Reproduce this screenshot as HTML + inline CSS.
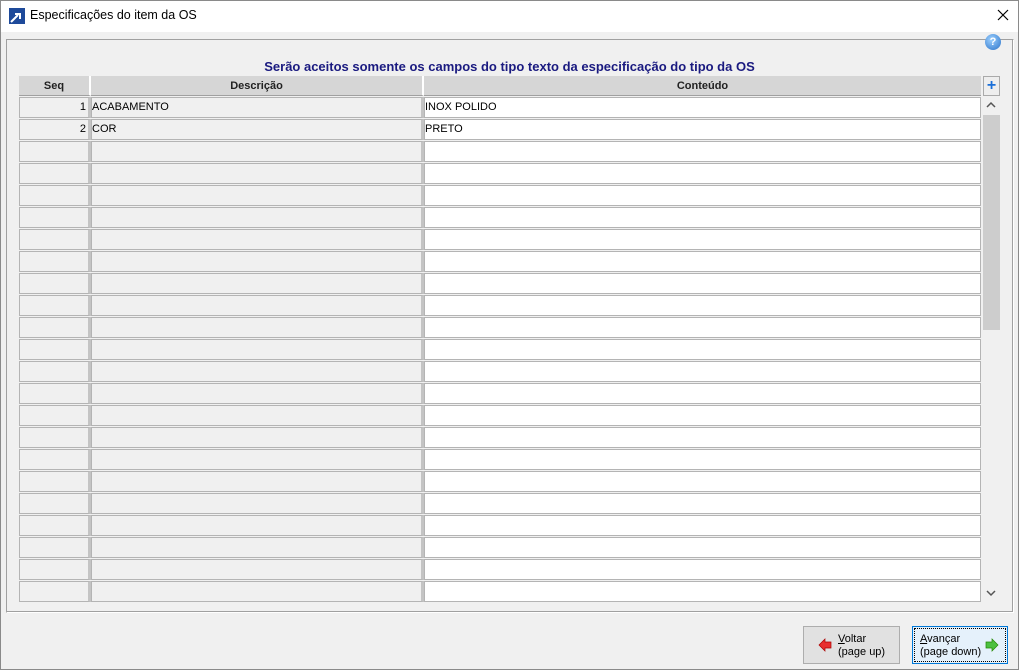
<!DOCTYPE html>
<html><head><meta charset="utf-8"><style>
*{box-sizing:border-box;margin:0;padding:0}
body{width:1019px;height:670px;background:#f0f0f0;font-family:"Liberation Sans",Tahoma,sans-serif;font-size:11px;position:relative;overflow:hidden}
.frame{position:absolute;left:0;top:0;width:1019px;height:670px;border:1px solid #8a8a8a;pointer-events:none}
.title{position:absolute;left:0;top:0;width:1019px;height:32px;background:#fff}
.title span{position:absolute;left:30px;top:8px;font-size:12.5px;color:#000}
.panel{position:absolute;left:6px;top:39px;width:1008px;height:574px;border:1px solid #a0a0a0;border-right-color:#fff;border-bottom-color:#fff;box-shadow:inset -1px -1px 0 #a0a0a0}
.hdr{position:absolute;top:76px;height:20px;background:#d6d6d6;border-bottom:1px solid #a0a0a0;font-weight:bold;text-align:center;line-height:20px;font-size:11px;color:#222}
.row{position:absolute;left:19px;height:21px;width:962px}
.c{position:absolute;top:0;height:21px;border:1px solid #b4b4b4;line-height:19px;white-space:nowrap;overflow:hidden}
.s{left:0;width:72px;background:#f0f0f0;text-align:right;padding-right:2px;border-right:3px solid #c4c4c4}
.d{left:72px;width:333px;background:#f0f0f0;border-right:3px solid #c4c4c4}
.t{left:405px;width:557px;background:#fff}
.btn{position:absolute;top:626px;height:38px;border:1px solid #adadad;background:#e1e1e1;font-size:11px;line-height:13px;color:#000}
</style></head><body>
<div class="title">
<svg style="position:absolute;left:9px;top:8px" width="16" height="16"><rect width="16" height="16" fill="#1e4a9a"/><path d="M2 14 L9 7 M6 6 H11 V11" stroke="#fff" stroke-width="2" fill="none"/></svg>
<span>Especificações do item da OS</span>
<svg style="position:absolute;left:997px;top:9px" width="12" height="12"><path d="M1 1L11 11M11 1L1 11" stroke="#000" stroke-width="1.2"/></svg>
</div>
<div class="panel"></div>
<div style="position:absolute;left:985px;top:34px;width:16px;height:16px;border-radius:50%;background:radial-gradient(circle at 40% 35%,#9cd0ff,#2a72c8);color:#fff;font-weight:bold;font-size:11px;text-align:center;line-height:16px">?</div>
<div style="position:absolute;left:0;width:1019px;top:59px;text-align:center;font-weight:bold;font-size:13px;color:#1a1a80">Serão aceitos somente os campos do tipo texto da especificação do tipo da OS</div>
<div class="hdr" style="left:19px;width:72px;border-right:2px solid #fff">Seq</div>
<div class="hdr" style="left:91px;width:333px;border-right:2px solid #fff">Descrição</div>
<div class="hdr" style="left:424px;width:557px">Conteúdo</div>
<div style="position:absolute;left:983px;top:76px;width:17px;height:20px;border:1px solid #aaa;background:#eee;color:#1a6fd8;font-weight:bold;font-size:16px;line-height:17px;text-align:center">+</div>
<div style="position:absolute;left:983px;top:97px;width:17px;height:505px;background:#f0f0f0"></div>
<div style="position:absolute;left:983px;top:115px;width:17px;height:215px;background:#cdcdcd"></div>
<svg style="position:absolute;left:986px;top:101px" width="10" height="8"><path d="M1 6L5 2L9 6" stroke="#555" stroke-width="1.5" fill="none"/></svg>
<svg style="position:absolute;left:986px;top:589px" width="10" height="8"><path d="M1 2L5 6L9 2" stroke="#555" stroke-width="1.5" fill="none"/></svg>
<div id="rows"></div>
<script>
var h='';for(var i=0;i<23;i++){var y=97+i*22;var s='',d='',t='';if(i==0){s='1';d='ACABAMENTO';t='INOX POLIDO'}if(i==1){s='2';d='COR';t='PRETO'}
h+='<div class="row" style="top:'+y+'px"><div class="c s">'+s+'</div><div class="c d">'+d+'</div><div class="c t">'+t+'</div></div>'}
document.getElementById('rows').innerHTML=h;
</script>
<div class="btn" style="left:803px;width:97px">
<svg style="position:absolute;left:14px;top:11px" width="14" height="14"><path d="M1 7L7 1V4H13V10H7V13Z" fill="#e83030" stroke="#a00" stroke-width=".7"/></svg>
<div style="position:absolute;left:34px;top:6px"><u>V</u>oltar<br>(page up)</div></div>
<div class="btn" style="left:912px;width:96px;background:#e5f1fb;border:1px solid #0078d7;outline:1px dotted #000;outline-offset:-3px">
<svg style="position:absolute;left:72px;top:11px" width="14" height="14"><path d="M13 7L7 1V4H1V10H7V13Z" fill="#4cc040" stroke="#280" stroke-width=".7"/></svg>
<div style="position:absolute;left:7px;top:6px"><u>A</u>vançar<br>(page down)</div></div>
<div class="frame"></div>
</body></html>
